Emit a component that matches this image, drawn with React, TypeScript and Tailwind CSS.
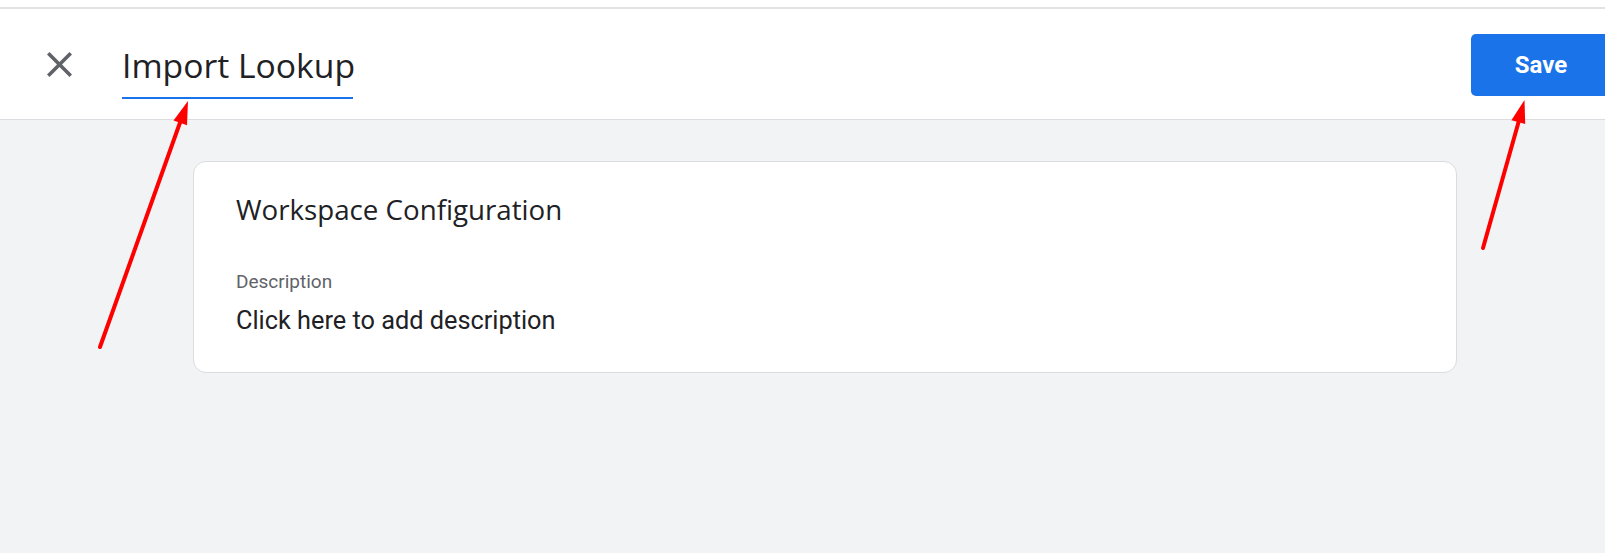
import React from "react";

function CloseIcon() {
  return (
    <svg width="25" height="25" viewBox="5 5 14 14" fill="#5f6368" aria-hidden="true">
      <path d="M19 6.41L17.59 5 12 10.59 6.41 5 5 6.41 10.59 12 5 17.59 6.41 19 12 13.41 17.59 19 19 17.59 13.41 12z" />
    </svg>
  );
}

// Red callout arrows drawn over the editor
function Callouts() {
  return (
    <svg
      className="pointer-events-none absolute inset-0"
      width="1605"
      height="553"
      viewBox="0 0 1605 553"
    >
      <g stroke="#ff0000" strokeWidth="4" strokeLinecap="round" fill="none">
        <line x1="100" y1="347" x2="182" y2="117" />
        <line x1="1483" y1="248" x2="1520" y2="117" />
      </g>
      <g fill="#ff0000">
        <polygon points="188,101 173.5,120.4 187,125.2" />
        <polygon points="1524.5,100 1511.4,120.2 1525.2,124.1" />
      </g>
    </svg>
  );
}

export default function App() {
  return (
    <div
      className="relative h-[553px] w-[1605px] overflow-hidden bg-[#f1f3f4] text-[#202124]"
      style={{ fontFamily: "Roboto, 'Noto Sans', sans-serif" }}
    >
      <div className="h-[7px] bg-white" />
      <div className="h-[2px] bg-[#e3e3e3]" />
      <header className="flex h-[111px] items-center border-b border-[#dadce0] bg-white">
        <div className="flex w-[122px] items-center pl-[47px] pt-[1px]">
          <CloseIcon />
        </div>
        <div className="flex flex-col pt-[16px]">
          <span
            className="text-[33.7px] leading-[40px] text-[#202124]"
            style={{ fontFamily: "'Open Sans', Roboto, sans-serif" }}
          >
            Import Lookup
          </span>
          <div className="mt-[12px] h-[2px] w-[231px] bg-[#1a73e8]" />
        </div>
        <div className="flex-1" />
        <button className="mr-[-6px] mt-[1px] flex h-[62px] w-[140px] items-center justify-center rounded-[5px] bg-[#1a73e8] text-[24px] font-bold text-white">
          Save
        </button>
      </header>
      <main className="pl-[193px] pt-[41px]">
        <section className="h-[212px] w-[1264px] rounded-[13px] border border-[#dadce0] bg-white px-[42px] pt-[30px]">
          <h2
            className="text-[27.7px] leading-[34px]"
            style={{ fontFamily: "'Open Sans', Roboto, sans-serif" }}
          >
            Workspace Configuration
          </h2>
          <div className="mt-[44px] text-[19px] leading-[24px] text-[#5f6368]">Description</div>
          <div className="mt-[12px] text-[25.3px] leading-[30px] text-[#202124]">
            Click here to add description
          </div>
        </section>
      </main>
      <Callouts />
    </div>
  );
}
